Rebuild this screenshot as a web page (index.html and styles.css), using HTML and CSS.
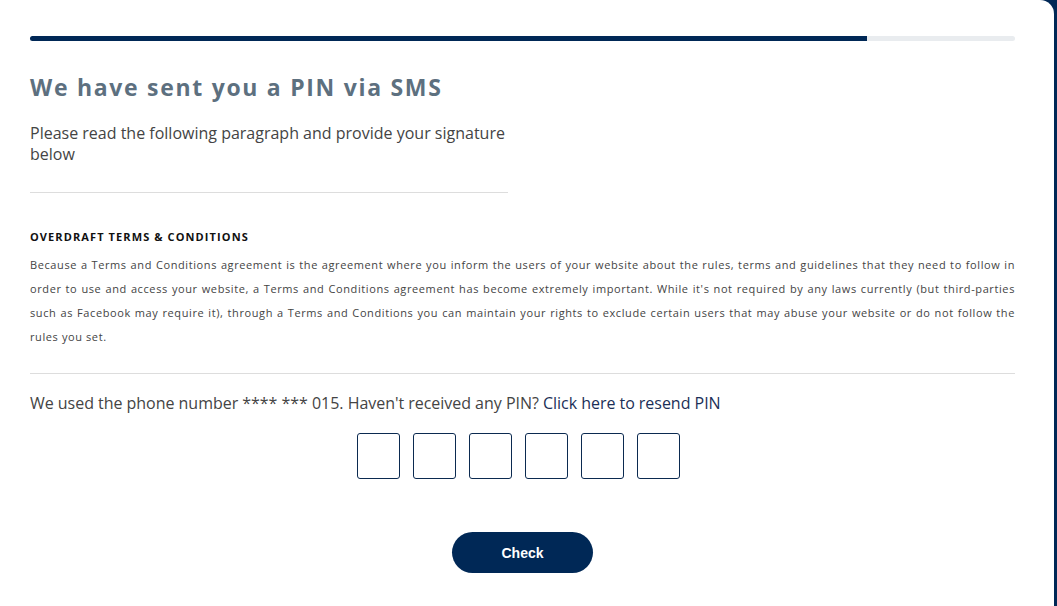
FILE: index.html
```html
<!DOCTYPE html>
<html lang="en">

<head>
  <meta charset="UTF-8" />
  <meta name="viewport" content="width=device-width, initial-scale=1.0" />
  <title>PIN via SMS</title>
  <link rel="stylesheet" href="styles.css">
</head>

<body>
  <div class="card">
    <div class="progress">
      <div class="progressBar" style="width: 85%"></div>
    </div>

    <h1 class="title">We have sent you a PIN via SMS</h1>

    <div class="intro">
      <p>Please read the following paragraph and provide your signature below</p>
    </div>

    <section class="terms">
      <h2>OVERDRAFT TERMS &amp; CONDITIONS</h2>
      <p>Because a Terms and Conditions agreement is the agreement where you inform the users of your website about the rules, terms and guidelines that they need to follow in order to use and access your website, a Terms and Conditions agreement has become extremely important. While it's not required by any laws currently (but third-parties such as Facebook may require it), through a Terms and Conditions you can maintain your rights to exclude certain users that may abuse your website or do not follow the rules you set.</p>
    </section>

    <p class="phone">We used the phone number **** *** 015. Haven't received any PIN? <a href="#">Click here to resend PIN</a></p>

    <form class="pinForm">
      <div class="pinWrap">
        <input type="text" maxlength="1" />
        <input type="text" maxlength="1" />
        <input type="text" maxlength="1" />
        <input type="text" maxlength="1" />
        <input type="text" maxlength="1" />
        <input type="text" maxlength="1" />
      </div>
      <button type="button" class="btnCheck">Check</button>
    </form>
  </div>
</body>

</html>
```

FILE: styles.css
```css
* {
  margin: 0;
  padding: 0;
  box-sizing: border-box;
}

body {
  background-color: #002856;
  font-family: "Open Sans", sans-serif;
  color: #444;
}

.card {
  width: 1054px;
  height: 606px;
  background-color: #fff;
  border-top-right-radius: 14px;
  padding: 36px 39px 0 30px;
}

/* progress */
.progress {
  height: 5px;
  background-color: #e9ecef;
  border-radius: 3px;
}

.progressBar {
  height: 100%;
  background-color: #002856;
  border-radius: 3px 0 0 3px;
}

.title {
  margin-top: 30px;
  font-size: 23px;
  font-weight: 700;
  letter-spacing: 1.7px;
  color: #5d707f;
  line-height: 32px;
}

.intro {
  width: 478px;
  margin-top: 20px;
  padding-bottom: 27px;
  border-bottom: 1px solid #ddd;
}

.intro p {
  font-size: 16px;
  line-height: 21px;
  color: #444;
}

/* terms */
.terms {
  padding: 36px 0 24px;
  border-bottom: 1px solid #ddd;
}

.terms h2 {
  font-size: 11px;
  font-weight: 700;
  letter-spacing: 1.1px;
  color: #111;
  line-height: 16px;
}

.terms p {
  margin-top: 8px;
  font-size: 11px;
  line-height: 24px;
  letter-spacing: 0.6px;
  text-align: justify;
  color: #444;
}

.phone {
  margin-top: 18px;
  font-size: 16px;
  line-height: 22px;
  letter-spacing: -0.03px;
  color: #444;
}

.phone a {
  color: #1b2f57;
  text-decoration: none;
}

/* pin */
.pinForm {
  display: flex;
  flex-direction: column;
  align-items: center;
}

.pinWrap {
  display: flex;
  gap: 13px;
  margin-top: 19px;
  padding-right: 9px;
}

.pinWrap input {
  width: 43px;
  height: 46px;
  border: 1px solid #0b2a50;
  border-radius: 3px;
  background: #fff;
  font-size: 20px;
  text-align: center;
}

.btnCheck {
  margin-top: 53px;
  width: 141px;
  height: 41px;
  border: 0;
  border-radius: 21px;
  background-color: #002856;
  color: #fff;
  font-family: "Liberation Sans", Arial, sans-serif;
  font-size: 14px;
  font-weight: 700;
}
```
